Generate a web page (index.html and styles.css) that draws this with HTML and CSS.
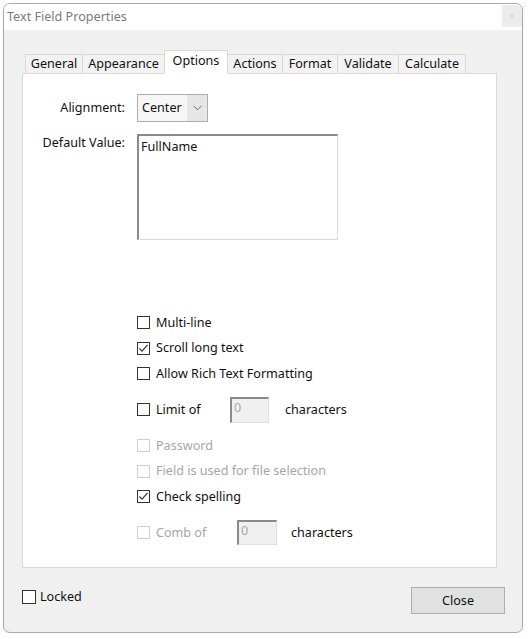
FILE: index.html
```html
<!DOCTYPE html>
<html lang="en">
<head>
<meta charset="utf-8">
<title>Text Field Properties</title>
<link rel="stylesheet" href="styles.css">
</head>
<body>
<div class="window">
  <div class="titlebar">
    <span class="title">Text Field Properties</span>
    <span class="close-box">×</span>
  </div>
  <div class="body">
    <div class="tabs">
      <div class="tab tab-general">General</div>
      <div class="tab tab-appearance">Appearance</div>
      <div class="tab tab-options active">Options</div>
      <div class="tab tab-actions">Actions</div>
      <div class="tab tab-format">Format</div>
      <div class="tab tab-validate">Validate</div>
      <div class="tab tab-calculate">Calculate</div>
    </div>
    <div class="panel">
      <div class="form-grid">
        <div class="field-label label-center">Alignment:</div>
        <div class="select">
          <span class="select-value">Center</span>
          <span class="select-arrow">
            <svg width="9" height="6" viewBox="0 0 9 6"><polyline points="0.5,0.8 4.5,4.8 8.5,0.8" fill="none" stroke="#6a6a6a" stroke-width="1"/></svg>
          </span>
        </div>
        <div class="field-label label-top">Default Value:</div>
        <div class="textarea">FullName</div>
      </div>

      <div class="options">
        <div class="row">
          <span class="checkbox"></span><span class="cb-text">Multi-line</span>
        </div>
        <div class="row">
          <span class="checkbox"><svg width="13" height="13" viewBox="0 0 13 13"><polyline points="2.3,6.3 5,9.2 10.6,2.8" fill="none" stroke="#333" stroke-width="1.2"/></svg></span><span class="cb-text">Scroll long text</span>
        </div>
        <div class="row">
          <span class="checkbox"></span><span class="cb-text">Allow Rich Text Formatting</span>
        </div>
        <div class="row row-input">
          <span class="cb-group cb-group-limit"><span class="checkbox"></span><span class="cb-text">Limit of</span></span>
          <span class="num-input num-limit">0</span>
          <span class="cb-text">characters</span>
        </div>
        <div class="row disabled">
          <span class="checkbox"></span><span class="cb-text">Password</span>
        </div>
        <div class="row disabled">
          <span class="checkbox"></span><span class="cb-text">Field is used for file selection</span>
        </div>
        <div class="row">
          <span class="checkbox"><svg width="13" height="13" viewBox="0 0 13 13"><polyline points="2.3,6.3 5,9.2 10.6,2.8" fill="none" stroke="#333" stroke-width="1.2"/></svg></span><span class="cb-text">Check spelling</span>
        </div>
        <div class="row row-input">
          <span class="cb-group cb-group-comb disabled"><span class="checkbox"></span><span class="cb-text">Comb of</span></span>
          <span class="num-input num-comb">0</span>
          <span class="cb-text">characters</span>
        </div>
      </div>
    </div>

    <div class="footer">
      <div class="locked">
        <span class="checkbox checkbox-lg"></span><span class="cb-text">Locked</span>
      </div>
      <button class="btn">Close</button>
    </div>
  </div>
</div>
</body>
</html>
```

FILE: styles.css
```css
* {
  box-sizing: border-box;
}

html, body {
  margin: 0;
  padding: 0;
  background: #ffffff;
}

body {
  font-family: "Noto Sans", "Open Sans", "Liberation Sans", sans-serif;
  font-size: 12.6px;
  color: #111111;
}

.window {
  margin: 3px 0 0 3px;
  width: 520px;
  height: 630px;
  border: 1px solid #ababab;
  border-radius: 7px;
  background: #f0f0f0;
  overflow: hidden;
  box-shadow: 0 1px 3px rgba(0, 0, 0, 0.08);
}

.titlebar {
  height: 26px;
  background: #ffffff;
  display: flex;
  justify-content: space-between;
  align-items: flex-start;
}

.title {
  color: #7b7b7b;
  font-size: 12.6px;
  line-height: 26px;
  padding-left: 3px;
}

.close-box {
  width: 20px;
  height: 22px;
  margin-top: 1px;
  margin-right: 0;
  background: #ececec;
  color: #d6d6d6;
  font-size: 11px;
  line-height: 22px;
  text-align: center;
}

.body {
  padding: 20px 0 0 18px;
}

/* Tabs */
.tabs {
  display: flex;
  align-items: flex-end;
  height: 24px;
  margin-left: 3px;
  margin-bottom: -1px;
  position: relative;
  z-index: 1;
}

.tab {
  height: 20px;
  border: 1px solid #d9d9d9;
  background: #f2f2f2;
  margin-left: -1px;
  text-align: center;
  line-height: 17px;
  color: #111111;
  white-space: nowrap;
}

.tab:first-child {
  margin-left: 0;
}

.tab.active {
  height: 24px;
  background: #ffffff;
  border-bottom-color: #ffffff;
  line-height: 20px;
  position: relative;
  z-index: 2;
}

.tab-general { width: 58px; }
.tab-appearance { width: 83px; }
.tab-options { width: 64px; }
.tab-actions { width: 56px; }
.tab-format { width: 56px; }
.tab-validate { width: 62px; }
.tab-calculate { width: 68px; }

/* Panel */
.panel {
  width: 475px;
  height: 495px;
  border: 1px solid #d9d9d9;
  background: #ffffff;
}

.form-grid {
  display: grid;
  grid-template-columns: 102px 201px;
  column-gap: 12px;
  row-gap: 12px;
  padding-top: 20px;
}

.field-label {
  text-align: right;
  line-height: 18px;
  white-space: nowrap;
}

.label-center {
  align-self: center;
}

.label-top {
  align-self: start;
}

.select {
  width: 71px;
  height: 28px;
  border: 1px solid #adadad;
  display: flex;
  background: #ffffff;
}

.select-value {
  flex: 1;
  padding-left: 4px;
  line-height: 25px;
  background: #f7f7f7;
}

.select-arrow {
  width: 20px;
  display: flex;
  align-items: center;
  justify-content: center;
  background: #e6e6e6;
}

.textarea {
  width: 201px;
  height: 106px;
  border-top: 2px solid #8a8a8a;
  border-left: 2px solid #8a8a8a;
  border-right: 1px solid #dadada;
  border-bottom: 1px solid #dadada;
  padding: 2px 2px;
  line-height: 18px;
  background: #ffffff;
}

/* Options list */
.options {
  margin-top: 70px;
  padding-left: 114px;
}

.row {
  display: flex;
  align-items: center;
  height: 25.5px;
}

.row-input {
  height: 46.5px;
}

.checkbox {
  width: 13px;
  height: 13px;
  border: 1px solid #333333;
  background: #ffffff;
  margin-right: 6px;
  flex: none;
  display: flex;
  align-items: center;
  justify-content: center;
}

.checkbox svg {
  display: block;
  margin: -1px;
}

.cb-text {
  line-height: 18px;
  white-space: nowrap;
}

.disabled .cb-text {
  color: #a6a6a6;
}

.disabled .checkbox {
  border-color: #cfcfcf;
}

.cb-group {
  display: flex;
  align-items: center;
}

.cb-group-limit {
  width: 93px;
}

.cb-group-comb {
  width: 100px;
}

.num-input {
  background: #f0f0f0;
  border-top: 2px solid #8a8a8a;
  border-left: 2px solid #8a8a8a;
  border-right: 1px solid #e0e0e0;
  border-bottom: 1px solid #e0e0e0;
  color: #a8a8a8;
  padding-left: 2px;
  line-height: 18px;
}

.num-limit {
  width: 39px;
  height: 26px;
  margin-right: 16px;
}

.num-comb {
  width: 40px;
  height: 25px;
  margin-right: 14px;
}

/* Footer */
.footer {
  display: flex;
  justify-content: space-between;
  align-items: flex-start;
  padding-top: 19px;
  padding-right: 17px;
}

.locked {
  display: flex;
  align-items: center;
  margin-top: 1px;
}

.checkbox-lg {
  width: 14px;
  height: 14px;
  margin-right: 4px;
}

.btn {
  width: 94px;
  height: 27px;
  border: 1px solid #adadad;
  background: #e1e1e1;
  font-family: inherit;
  font-size: 12.6px;
  color: #111111;
  padding: 0;
}
```
